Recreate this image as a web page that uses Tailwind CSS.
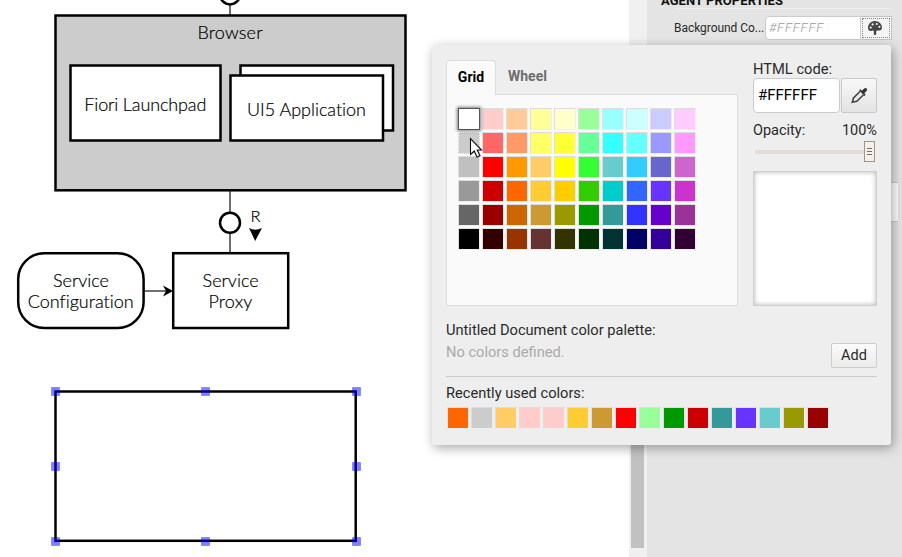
<!DOCTYPE html>
<html lang="en">
<head>
<meta charset="utf-8">
<title>Diagram editor</title>
<script src="https://cdn.jsdelivr.net/npm/@tailwindcss/browser@4"></script>
</head>
<body class="relative flex h-[557px] w-[902px] overflow-hidden bg-white font-['Roboto',sans-serif] text-[#2a2a2a]">
  <!-- Canvas -->
  <main class="h-full w-[629px] shrink-0 bg-white">
    <svg width="629" height="557" class="block font-['Lato_Light','Lato',sans-serif] font-light [font-variant-ligatures:none]" fill="#fff" stroke="#000" stroke-width="2.5">
      <path d="M230 0V15M230 190V253" stroke="#222" stroke-width="1.3"/>
      <circle cx="230" cy="-5.6" r="10"/>
      <rect x="55.5" y="15.5" width="350" height="174.8" fill="#ccc"/>
      <rect x="70.5" y="65.5" width="150" height="75"/>
      <rect x="240.5" y="65.5" width="152.5" height="65"/>
      <rect x="230.5" y="75.5" width="152.5" height="65"/>
      <circle cx="230" cy="222.7" r="10"/>
      <rect x="173.2" y="253.2" width="115" height="74.8"/>
      <rect x="18.2" y="253.2" width="125.4" height="74.8" rx="26"/>
      <path d="M144 291H166" stroke="#222" stroke-width="1.3"/>
      <path d="M173 291L163 285.5L166 291L163 296.5Z" fill="#000" stroke="none"/>
      <path d="M255.2 241L249 228Q255.2 231.5 262 228Z" fill="#000" stroke="none"/>
      <rect x="55.5" y="391.5" width="300.2" height="149.3"/>
      <g fill="#000" stroke="#000" stroke-width=".2" font-size="18" text-anchor="middle">
        <text x="230" y="39" textLength="65">Browser</text>
        <text x="145.3" y="111" textLength="122">Fiori Launchpad</text>
        <text x="306.5" y="116" textLength="119">UI5 Application</text>
        <text x="255.6" y="222" font-size="16.5">R</text>
        <text x="81" y="287" textLength="56">Service</text>
        <text x="80.7" y="308" textLength="106">Configuration</text>
        <text x="230.6" y="287" textLength="56">Service</text>
        <text x="230.4" y="308" textLength="44">Proxy</text>
      </g>
      <g fill="#00f" fill-opacity=".5" stroke="#00f" stroke-opacity=".28" stroke-width="1">
        <rect x="51.5" y="387.5" width="8" height="8"/><rect x="201.5" y="387.5" width="8" height="8"/><rect x="352.5" y="387.5" width="8" height="8"/>
        <rect x="51.5" y="462.5" width="8" height="8"/><rect x="352.5" y="462.5" width="8" height="8"/>
        <rect x="51.5" y="537.5" width="8" height="8"/><rect x="201.5" y="537.5" width="8" height="8"/><rect x="352.5" y="537.5" width="8" height="8"/>
      </g>
    </svg>
  </main>
  <!-- Scrollbar -->
  <div class="w-[18px] shrink-0 bg-[#f0f0f0] pl-[2px] pt-[60px]"><div class="h-[488px] w-[13px] bg-[#c1c1c1]"></div></div>
  <!-- Property panel -->
  <aside class="relative w-[255px] shrink-0 bg-[#e4e4e4]">
    <h2 class="-mt-[7px] ml-[14px] h-[15px] w-[211px] overflow-visible whitespace-nowrap text-[13px] font-bold leading-[15px] tracking-[.05px] text-[#111]">AGENT PROPERTIES</h2>
    <div class="ml-[28px] h-px w-[217px] bg-[#efefef]"></div>
    <div class="ml-[27px] mt-[7px] flex h-[24px] w-[218px] items-center">
      <span class="w-[91px] whitespace-nowrap text-[12px] tracking-[-.05px]">Background Co...</span>
      <span class="flex h-[24px] w-[96px] items-center rounded-l border border-[#ccc] bg-white pl-[3px] text-[13px] font-light italic tracking-[.75px] text-[#999]">#FFFFFF</span>
      <span class="flex h-[24px] w-[31px] items-center justify-center border border-l-0 border-[#c4c4c4] bg-[#f5f5f5] p-px">
        <span class="flex size-full items-center justify-center border border-dotted border-[#888] pr-[2px]">
          <svg class="shrink-0" width="14" height="14" viewBox="0 0 14 14"><path d="M7 0C3 0 0 3 0 7c0 2.500 2 3.700 4 2.700 2-.9 2 .5 1.800 2C5.600 13.300 6 14 7 14c1.600 0 1.400-1.500 1.200-2.500-.3-1.500.5-2 2-2C12.500 9.500 14 9 14 6.500 14 3 11 0 7 0Z" fill="#444"/><g fill="#f5f5f5"><circle cx="2.700" cy="6.600" r="1.100"/><circle cx="4.600" cy="3.400" r="1.100"/><circle cx="8.800" cy="3" r="1.100"/><circle cx="11.400" cy="5.800" r="1.100"/></g></svg>
        </span>
      </span>
    </div>
    <div class="ml-auto mr-[4px] mt-[142px] h-[40px] w-[20px] border-y border-[#ccc] bg-white"></div>
  </aside>

  <!-- Colour picker -->
  <section class="absolute left-[432px] top-[45px] h-[400px] w-[459px] rounded-[3px] bg-[#eee] px-[14px] pt-[15px] shadow-[2px_3px_12px_rgba(0,0,0,0.35)]">
    <div class="flex h-[246px] justify-between">
      <div class="w-[292px]">
        <div class="flex h-[34px] text-[14px] font-bold">
          <div class="relative -mb-px flex h-[35px] w-[50px] items-center justify-center rounded-t-[4px] border border-b-0 border-[#dcdcdc] bg-[#fafafa] pb-[2px] text-black">Grid</div>
          <div class="flex w-[63px] items-center justify-center pb-px text-[#6d6d6d]">Wheel</div>
        </div>
        <div class="h-[212px] border border-[#dcdcdc] bg-[#fafafa] pl-[11px] pt-[13px]">
          <div id="grid" class="grid w-[238px] grid-cols-10 gap-[2px]"></div>
        </div>
      </div>
      <div class="w-[124px] text-[14.7px]">
        <div class="h-[18px] whitespace-nowrap leading-[18px]">HTML code:</div>
        <div class="flex h-[35px] justify-between">
          <div class="flex w-[87px] items-center rounded-[4px] border border-[#ccc] bg-white pb-px pl-[4px] text-[15px] text-black">#FFFFFF</div>
          <div class="flex w-[36px] items-center justify-center rounded-[2px] border border-[#c9c9c9] bg-linear-to-b from-[#f8f8f8] to-[#e3e3e3]">
            <svg width="17" height="17" viewBox="0 0 17 17" fill="none"><path d="M9 4.500L2.500 11L1.300 15.300L5.800 14.300L12.500 7.700" stroke="#444" stroke-width="1.600"/><path d="M8 3.300L9.300 2.200L10.900 3.800L13.200 1.500Q14.600.5 15.700 1.600Q16.700 2.700 15.600 3.900L13.300 6.200L14.700 7.700L13.600 8.900Z" fill="#333"/></svg>
          </div>
        </div>
        <div class="mt-[9px] flex h-[18px] justify-between leading-[18px] text-[14.5px]"><span>Opacity:</span><span>100%</span></div>
        <div class="relative mt-px flex h-[21px] items-center pl-[2px]">
          <div class="h-[4px] w-[109px] bg-[#e4dcd9]"></div>
          <div class="flex h-[21px] w-[11px] flex-col items-center justify-center gap-[2px] border border-[#a29488] bg-[#f4f1ec]"><i class="h-px w-[5px] bg-[#776e65]"></i><i class="h-px w-[5px] bg-[#776e65]"></i><i class="h-px w-[5px] bg-[#776e65]"></i></div>
        </div>
        <div class="mt-[9px] h-[135px] border border-[#d0d0d0] bg-white shadow-[inset_0_0_5px_rgba(0,0,0,0.3)]"></div>
      </div>
    </div>
    <div class="mt-[13px] flex h-[58px] justify-between border-b border-[#ccc] text-[14.65px] leading-[22px]">
      <div class="whitespace-nowrap"><div>Untitled Document color palette:</div><div class="text-[#aaa]">No colors defined.</div></div>
      <div class="mt-[24px] flex h-[25px] w-[46px] items-center justify-center rounded-[2px] border border-[#ccc] bg-linear-to-b from-[#fbfbfb] to-[#ebebeb] text-[14.5px]">Add</div>
    </div>
    <div class="mt-[6px] h-[20px] text-[14.65px] leading-[20px]">Recently used colors:</div>
    <div id="recent" class="ml-px mt-[4px] flex gap-[2px]"></div>
  </section>

  <!-- Pointer -->
  <svg class="absolute left-[469px] top-[137px]" width="15" height="22" viewBox="0 0 15 22"><path d="M1.500 1.500V17.500L5.300 14L8 20L11 18.800L8.200 13H12.500Z" fill="#fff" stroke="#111" stroke-width="1.100"/></svg>

  <script>
    const rows = [
      'ffffff ffcccc ffcc99 ffff99 ffffcc 99ff99 99ffff ccffff ccccff ffccff',
      'cccccc ff6666 ff9966 ffff66 ffff33 66ff99 33ffff 66ffff 9999ff ff99ff',
      'c0c0c0 ff0000 ff9900 ffcc66 ffff00 33ff33 66cccc 33ccff 6666cc cc66cc',
      '999999 cc0000 ff6600 ffcc33 ffcc00 33cc00 00cccc 3366ff 6633ff cc33cc',
      '666666 990000 cc6600 cc9933 999900 009900 339999 3333ff 6600cc 993399',
      '000000 330000 993300 663333 333300 003300 003333 000066 330099 330033'
    ].join(' ').split(' ');
    const recent = 'ff6600 cccccc ffcc66 ffcccc ffcccc ffcc33 cc9933 ff0000 99ff99 009900 cc0000 339999 6633ff 66cccc 999900 990000'.split(' ');
    const swatch = (c, cls) => `<div class="${cls}" style="background-color:#${c}"></div>`;
    const base = 'size-[22px] shrink-0 border border-t-[#ddd] border-l-[#ddd] border-r-[#eee] border-b-[#eee]';
    document.getElementById('grid').innerHTML = rows.map((c, i) => swatch(c,
      i === 0 ? 'relative size-[22px] border border-[#555] shadow-[0_0_3px_1px_rgba(0,0,0,0.5)]' :
      i === 10 ? 'size-[22px] border border-dotted border-[#fafafa]' : base)).join('');
    document.getElementById('recent').innerHTML = recent.map(c => swatch(c, base)).join('');
  </script>
</body>
</html>
